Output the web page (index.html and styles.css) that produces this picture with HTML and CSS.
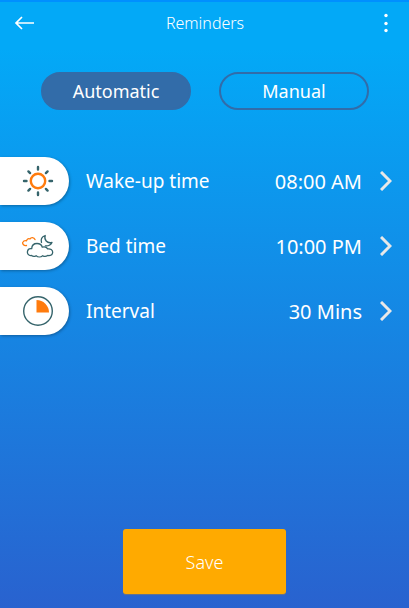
FILE: index.html
```html
<!DOCTYPE html>
<html lang="en">
<head>
    <meta charset="UTF-8">
    <meta name="viewport" content="width=device-width, initial-scale=1.0">
    <title>Reminders</title>
    <link rel="stylesheet" href="styles.css">
</head>
<body>
    <header class="topbar">
        <button class="icon-btn" type="button" aria-label="Back">
            <svg width="20" height="14" viewBox="0 0 20 14" fill="none" stroke="#fff" stroke-width="1.7">
                <path d="M8 1L2 7l6 6M2 7h18"/>
            </svg>
        </button>
        <h1>Reminders</h1>
        <button class="icon-btn" type="button" aria-label="More options">
            <svg width="4" height="20" viewBox="0 0 4 20" fill="#fff">
                <circle cx="2" cy="2.5" r="1.7"/>
                <circle cx="2" cy="10.5" r="1.7"/>
                <circle cx="2" cy="17.500" r="1.7"/>
            </svg>
        </button>
    </header>

    <main>
        <div class="modes">
            <button class="mode active" type="button" aria-pressed="true">Automatic</button>
            <button class="mode" type="button" aria-pressed="false">Manual</button>
        </div>

        <div class="list">
            <button class="row" type="button">
                <span class="tab">
                    <svg width="32" height="32" viewBox="0 0 32 32" fill="none" stroke-linecap="round">
                        <circle cx="16" cy="16" r="7.200" stroke="#ff7b0d" stroke-width="2.400"/>
                        <path d="M16 2v2.500M16 27.500v2.500M2 16h2.500M27.500 16h2.500M6.400 6.400l1.700 1.700M23.900 23.900l1.700 1.700M6.400 25.600l1.700-1.700M23.900 8.100l1.700-1.700" stroke="#35646b" stroke-width="2.400"/>
                    </svg>
                </span>
                <span class="label">Wake-up time</span>
                <span class="value">08:00 AM</span>
                <svg class="chevron" width="12" height="20" viewBox="0 0 12 20"><path d="M1 1l9 9-9 9"/></svg>
            </button>
            <button class="row" type="button">
                <span class="tab">
                    <svg width="32" height="32" viewBox="0 0 32 32" fill="none" stroke="#35646b" stroke-width="1.3" stroke-linecap="round" stroke-linejoin="round">
                        <path d="M4.500 15.500C1.500 16 0 13.500 1 12c.6-1.200 2-1.600 3.500-1.200C5 8.800 6.800 8.300 8 9c1-2 4-1.800 5 .6" stroke="#ff7b0d"/>
                        <path d="M9.500 25.500C6.500 26 5 23.500 5.500 21.300c.4-2 2.200-3 4.200-2.600C9.800 15.500 12 13.500 15 13.500c2.700 0 4.600 1.400 5.300 3.700 2.400-.6 4.400 0 5.400 1.700 2.800-.4 5 1 5 3.400 0 2.500-2.200 3.700-5 3.200-1.400 1-3.600 1.100-5 .2-1.800 1.500-4.800 1.500-6.600 0-1.400.9-3.400.8-4.600-.2z"/>
                        <path d="M19.500 12.500c-.8-2.800.4-5.800 3.700-7-1.400 4.200 1.700 8.200 6.800 7-1.200 2.400-3.600 3.700-6.600 3.400"/>
                    </svg>
                </span>
                <span class="label">Bed time</span>
                <span class="value">10:00 PM</span>
                <svg class="chevron" width="12" height="20" viewBox="0 0 12 20"><path d="M1 1l9 9-9 9"/></svg>
            </button>
            <button class="row" type="button">
                <span class="tab">
                    <svg width="32" height="32" viewBox="0 0 32 32">
                        <circle cx="16" cy="16" r="14.300" fill="none" stroke="#35646b" stroke-width="1.400"/>
                        <path d="M14.500 17.500V5a12.500 12.500 0 0 1 12.500 12.500z" fill="#ff7b0d"/>
                    </svg>
                </span>
                <span class="label">Interval</span>
                <span class="value">30 Mins</span>
                <svg class="chevron" width="12" height="20" viewBox="0 0 12 20"><path d="M1 1l9 9-9 9"/></svg>
            </button>
        </div>
    </main>

    <footer>
        <button class="save" type="button">Save</button>
    </footer>
</body>
</html>
```

FILE: styles.css
```css
* {
    box-sizing: border-box;
}
body {
    margin: 0;
    min-height: 100vh;
    display: flex;
    flex-direction: column;
    border-top: 2px solid #0090ff;
    background: linear-gradient(#03a9f7 0%, #03a9f7 8%, #2962cf 100%);
    color: #fff;
    font-family: "Noto Sans", "Open Sans", sans-serif;
}
button {
    border: 0;
    padding: 0;
    background: none;
    color: inherit;
    font: inherit;
    cursor: pointer;
}
svg {
    display: block;
}
.topbar {
    display: flex;
    align-items: center;
    justify-content: space-between;
    height: 42px;
    padding: 0 11px 0 12px;
}
.topbar h1 {
    margin: 0;
    font-size: 16px;
    font-weight: 300;
}
.icon-btn {
    width: 24px;
    height: 24px;
    display: flex;
    align-items: center;
    justify-content: center;
}
main {
    flex: 1;
}
.modes {
    display: flex;
    gap: 28px;
    padding: 28px 40px 0 41px;
}
.mode {
    flex: 1;
    height: 38px;
    border: 2px solid #326ca9;
    border-radius: 19px;
    font-size: 18px;
}
.mode.active {
    background: #326ca9;
}
.list {
    display: flex;
    flex-direction: column;
    gap: 17px;
    padding-top: 47px;
}
.row {
    display: flex;
    align-items: center;
    padding-right: 17px;
    font-size: 20px;
    text-align: left;
}
.tab {
    display: flex;
    align-items: center;
    justify-content: flex-end;
    width: 69px;
    height: 48px;
    padding-right: 15px;
    border-radius: 0 24px 24px 0;
    background: #fff;
    box-shadow: 1px 1px 3px rgba(0, 0, 0, 0.3);
}
.label {
    flex: 1;
    padding-left: 17px;
    font-size: 19px;
}
.value {
    padding-right: 18px;
}
.chevron {
    fill: none;
    stroke: #e8e8e8;
    stroke-width: 3;
}
footer {
    display: flex;
    justify-content: center;
    padding-bottom: 14px;
}
.save {
    width: 40%;
    height: 65px;
    border-radius: 3px;
    background: #ffaa00;
    box-shadow: 0 1px 1px rgba(120, 120, 120, 0.8);
    font-size: 18px;
    font-weight: 300;
}
```
